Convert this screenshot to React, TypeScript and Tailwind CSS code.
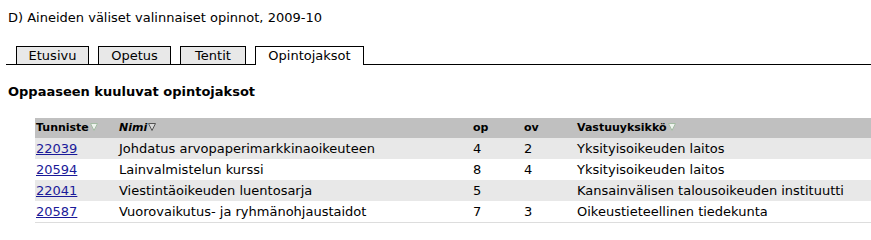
import React from 'react'

type Course = { code: string; name: string; op: string; ov: string; unit: string }

const courses: Course[] = [
  { code: '22039', name: 'Johdatus arvopaperimarkkinaoikeuteen', op: '4', ov: '2', unit: 'Yksityisoikeuden laitos' },
  { code: '20594', name: 'Lainvalmistelun kurssi', op: '8', ov: '4', unit: 'Yksityisoikeuden laitos' },
  { code: '22041', name: 'Viestintäoikeuden luentosarja', op: '5', ov: '', unit: 'Kansainvälisen talousoikeuden instituutti' },
  { code: '20587', name: 'Vuorovaikutus- ja ryhmänohjaustaidot', op: '7', ov: '3', unit: 'Oikeustieteellinen tiedekunta' },
]

const tabs = [
  { label: 'Etusivu', w: 'w-[73px]' },
  { label: 'Opetus', w: 'w-[73px]' },
  { label: 'Tentit', w: 'w-[66px]' },
  { label: 'Opintojaksot', w: 'w-[109px]' },
]

function SortArrow({ active }: { active?: boolean }) {
  return (
    <svg width="8" height="8" viewBox="0 0 8 8" className="ml-px inline-block align-[0px]">
      <polygon
        points="0.5,0.5 7.5,0.5 4,7.5"
        fill={active ? '#d8d8d8' : '#eef4ee'}
        stroke={active ? '#555' : '#a4bca4'}
        strokeWidth="1"
      />
    </svg>
  )
}

const cols = 'grid grid-cols-[83px_354px_51px_53px_1fr]'

export default function App() {
  return (
    <div className="w-[871px] h-[236px] bg-white text-black font-['DejaVu_Sans',Verdana,sans-serif]">
      <div className="px-2 pt-[9px] text-[13px] leading-[17px]">D) Aineiden väliset valinnaiset opinnot, 2009-10</div>

      <div className="ml-[6px] mt-[20px] flex gap-[9px] border-b border-black pl-[10px]">
        {tabs.map((t, i) => {
          const active = i === tabs.length - 1
          return (
            <div
              key={t.label}
              className={
                active
                  ? `${t.w} -mb-px h-[19px] border border-b-0 border-black bg-white text-center text-[13px] leading-[17px]`
                  : `${t.w} h-[18px] border border-b-0 border-black bg-[#e8e8e8] text-center text-[13px] leading-[17px]`
              }
            >
              {t.label}
            </div>
          )
        })}
      </div>

      <div className="px-2 pt-[18px] text-[13px] font-bold leading-[17px]">Oppaaseen kuuluvat opintojaksot</div>

      <div className="ml-[35px] mt-[18px] border-b border-[#dddddd]">
        <div className={`${cols} h-[20px] items-center bg-[#c0c0c0] text-[11px] font-bold`}>
          <div className="pl-px">Tunniste<SortArrow /></div>
          <div className="pl-px italic">Nimi<SortArrow active /></div>
          <div className="pl-px">op</div>
          <div className="pl-px">ov</div>
          <div className="pl-px">Vastuuyksikkö<SortArrow /></div>
        </div>
        {courses.map((c, i) => (
          <div
            key={c.code}
            className={`${cols} h-[21px] items-center text-[13px] ${i % 2 === 0 ? 'bg-[#e8e8e8]' : 'bg-white'}`}
          >
            <div className="pl-px">
              <a href="#" className="text-[#1a1a99] underline">{c.code}</a>
            </div>
            <div className="pl-px">{c.name}</div>
            <div className="pl-px">{c.op}</div>
            <div className="pl-px">{c.ov}</div>
            <div className="pl-px">{c.unit}</div>
          </div>
        ))}
      </div>
    </div>
  )
}
